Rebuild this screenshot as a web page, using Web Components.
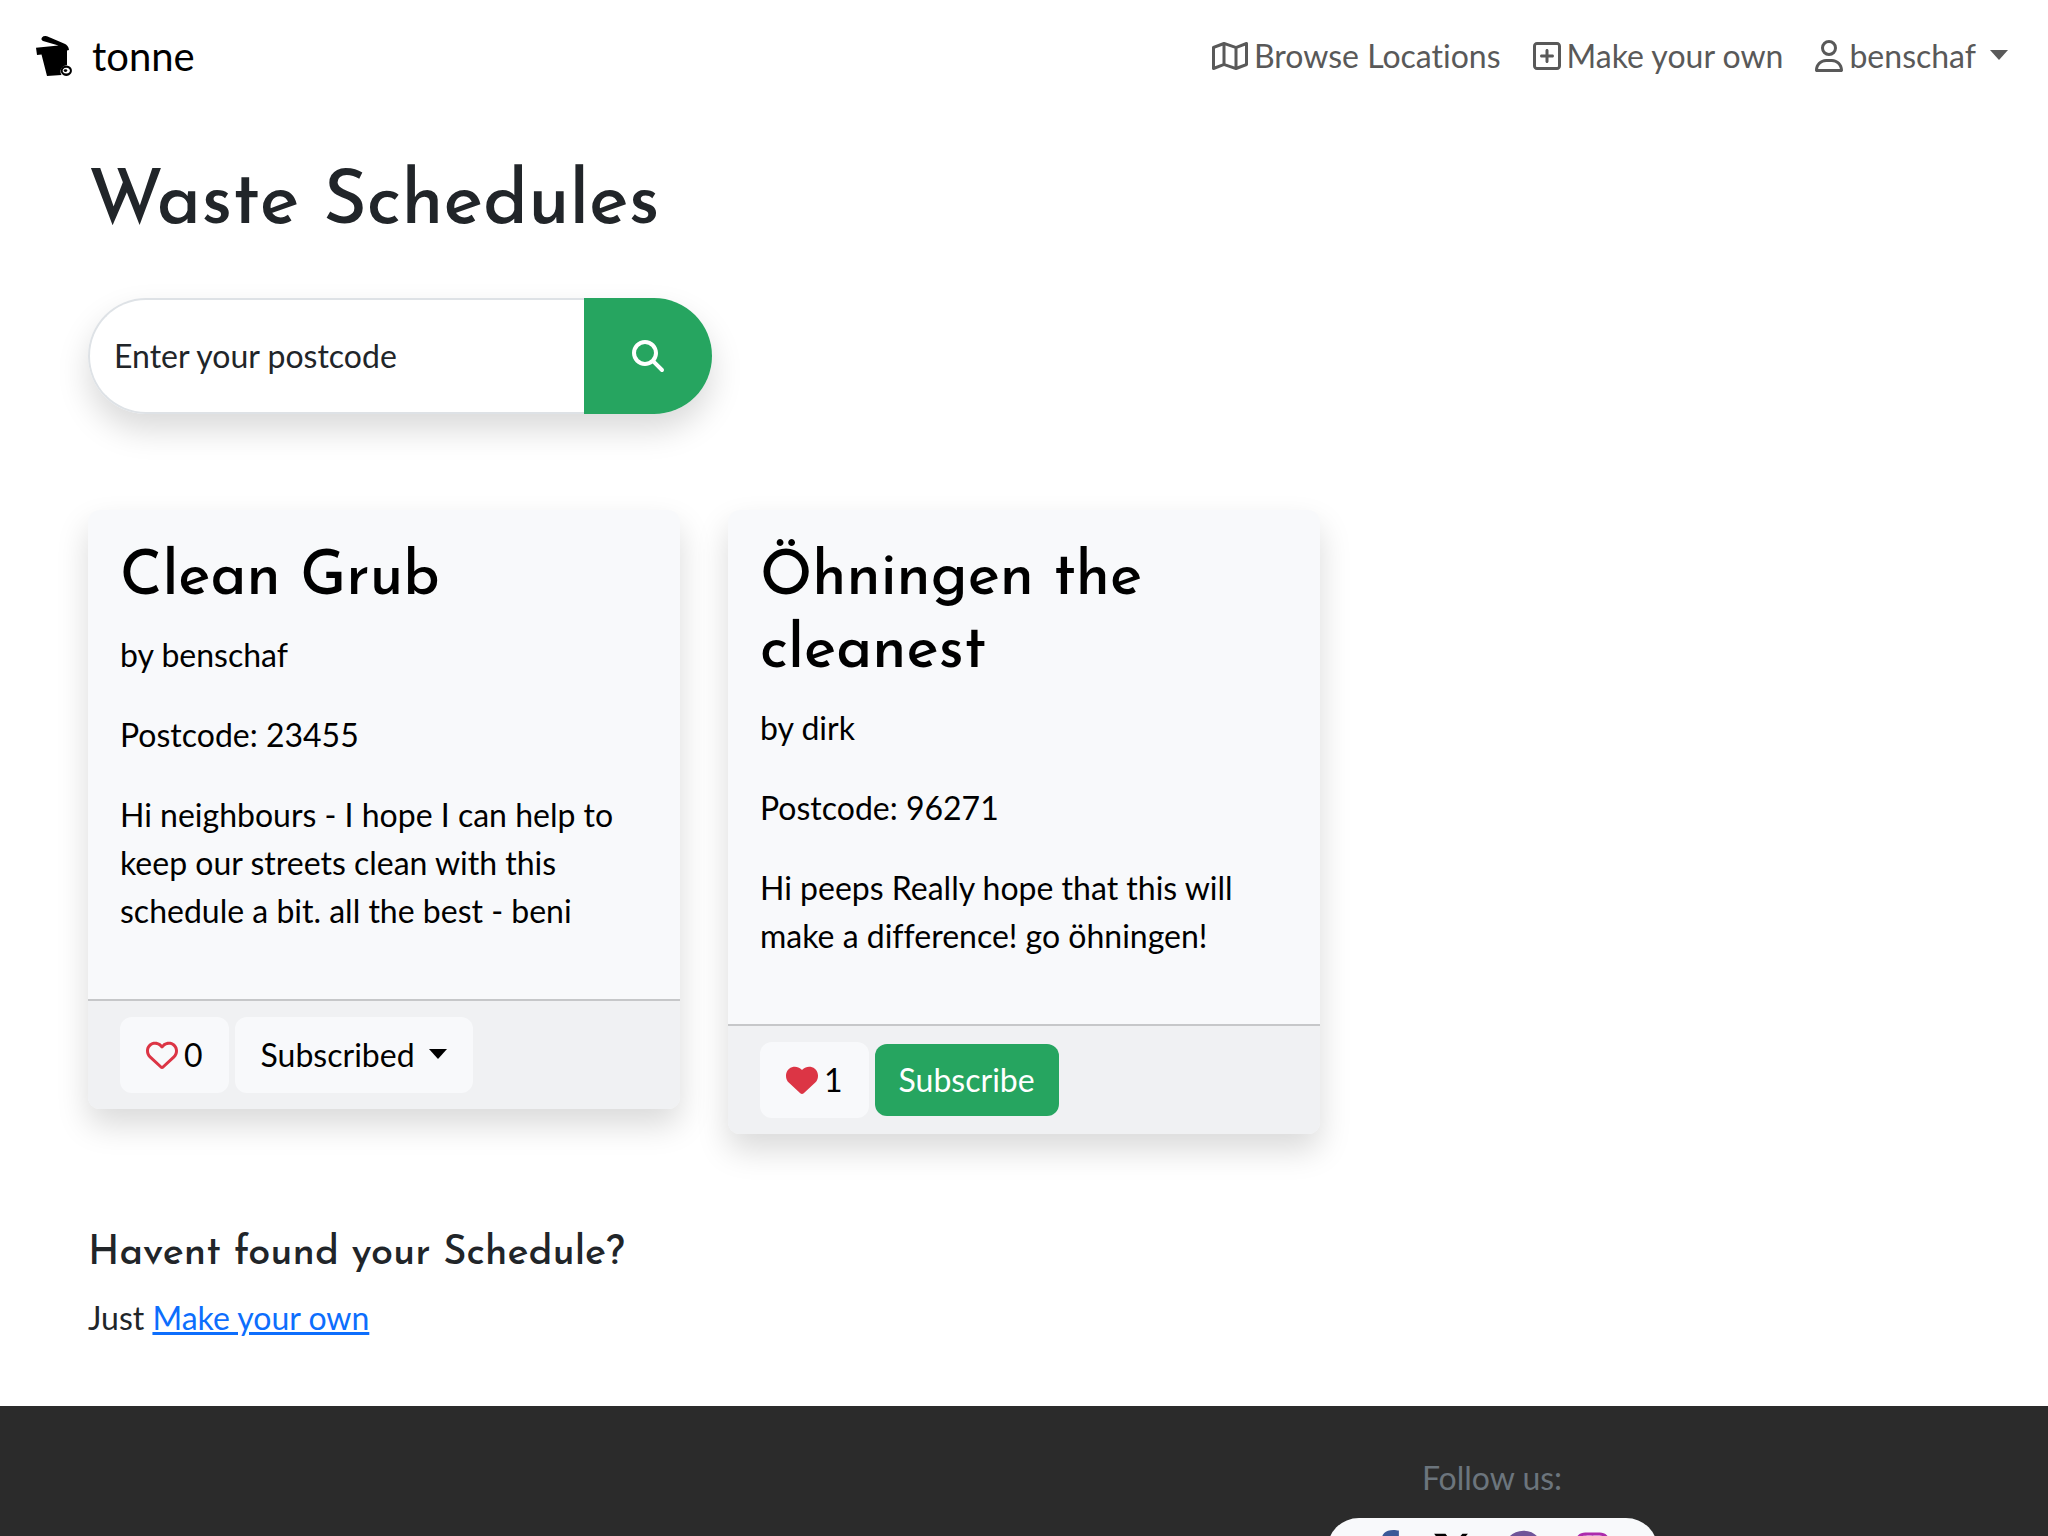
<!DOCTYPE html>
<html lang="en">
<head>
<meta charset="utf-8">
<title>tonne</title>
<style>
body { margin: 0; background: #fff; color: #212529; font: 400 32px/48px Lato, "Liberation Sans", sans-serif; text-rendering: optimizeLegibility; font-variant-ligatures: none; --heading: "Josefin Sans", Lato, sans-serif; --green: #26a560; }
</style>
</head>
<body>
<tonne-app></tonne-app>
<script>
const define = (name, html, init) => {
  const template = document.createElement('template');
  template.innerHTML = '<style>*{box-sizing:border-box}:host{display:block}svg{display:block;fill:currentColor}p{margin:0}button{font:inherit;color:inherit;border:0;cursor:pointer;text-rendering:inherit}</style>' + html;
  customElements.define(name, class extends HTMLElement {
    constructor() {
      super();
      this.attachShadow({ mode: 'open' }).append(template.content.cloneNode(true));
    }
    connectedCallback() { if (init) init(this, this.shadowRoot); }
  });
};

const icons = {
  map: [576, 'M565.6 36.2C572.1 40.7 576 48.1 576 56V392c0 10-6.2 18.9-15.5 22.4l-168 64c-5.2 2-10.9 2.1-16.1 .3L192.5 417.5l-160 61c-7.4 2.8-15.7 1.8-22.2-2.7S0 463.9 0 456V120c0-10 6.1-18.9 15.5-22.4l168-64c5.2-2 10.9-2.1 16.1-.3L383.5 94.5l160-61c7.4-2.8 15.7-1.8 22.2 2.7zM48 136.5V421.2l120-45.7V90.8L48 136.5zM360 422.7V137.3l-144-48V374.7l144 48zm48-1.5l120-45.7V90.8L408 136.5V421.2z'],
  plus: [448, 'M64 80c-8.8 0-16 7.2-16 16V416c0 8.8 7.2 16 16 16H384c8.8 0 16-7.2 16-16V96c0-8.8-7.2-16-16-16H64zM0 96C0 60.7 28.7 32 64 32H384c35.3 0 64 28.7 64 64V416c0 35.3-28.7 64-64 64H64c-35.3 0-64-28.7-64-64V96zM200 344V280H136c-13.3 0-24-10.7-24-24s10.7-24 24-24h64V168c0-13.3 10.7-24 24-24s24 10.7 24 24v64h64c13.3 0 24 10.7 24 24s-10.7 24-24 24H248v64c0 13.3-10.7 24-24 24s-24-10.7-24-24z'],
  user: [448, 'M304 128a80 80 0 1 0 -160 0 80 80 0 1 0 160 0zM96 128a128 128 0 1 1 256 0A128 128 0 1 1 96 128zM49.3 464H398.7c-8.9-63.3-63.3-112-129-112H178.3c-65.7 0-120.1 48.7-129 112zM0 482.3C0 383.8 79.8 304 178.3 304h91.4C368.2 304 448 383.8 448 482.3c0 16.4-13.3 29.7-29.7 29.7H29.7C13.3 512 0 498.7 0 482.3z'],
  search: [512, 'M416 208c0 45.9-14.9 88.3-40 122.7L502.6 457.4c12.5 12.5 12.5 32.8 0 45.3s-32.8 12.5-45.3 0L330.7 376c-34.4 25.2-76.8 40-122.7 40C93.1 416 0 322.9 0 208S93.1 0 208 0S416 93.1 416 208zM208 352a144 144 0 1 0 0-288 144 144 0 1 0 0 288z'],
  heart: [512, 'M225.8 468.2l-2.5-2.3L48.1 303.2C17.4 274.7 0 234.7 0 192.8v-3.3c0-70.4 50-130.8 119.2-144C158.6 37.9 198.9 47 231 69.6c9 6.4 17.4 13.8 25 22.3c4.2-4.8 8.7-9.2 13.5-13.3c3.7-3.2 7.5-6.2 11.5-9c0 0 0 0 0 0C313.1 47 353.4 37.9 392.8 45.4C462 58.6 512 119.1 512 189.5v3.3c0 41.9-17.4 81.9-48.1 110.4L288.7 465.9l-2.5 2.3c-8.2 7.6-19 11.9-30.2 11.9s-22-4.2-30.2-11.9zM239.1 145c-.4-.3-.7-.7-1-1.1l-17.8-20c0 0-.1-.1-.1-.1c0 0 0 0 0 0c-23.1-25.9-58-37.7-92-31.2C81.6 101.5 48 142.1 48 189.5v3.3c0 28.5 11.9 55.8 32.8 75.2L256 430.7 431.2 268c20.9-19.4 32.8-46.7 32.8-75.2v-3.3c0-47.3-33.6-88-80.1-96.9c-34-6.5-69 5.4-92 31.2c0 0 0 0-.1 .1s0 0-.1 .1l-17.8 20c-.3 .4-.7 .7-1 1.1c-4.5 4.5-10.6 7-16.9 7s-12.4-2.5-16.9-7z'],
  'heart-full': [512, 'M47.6 300.4L228.3 469.1c7.5 7 17.4 10.9 27.7 10.9s20.2-3.9 27.7-10.9L464.4 300.4c30.4-28.3 47.6-68 47.6-109.5v-5.8c0-69.9-50.5-129.5-119.4-141C347 36.5 300.6 51.4 268 84L256 96 244 84c-32.6-32.6-79-47.5-124.6-39.9C50.5 55.6 0 115.2 0 185.1v5.8c0 41.5 17.2 81.2 47.6 109.5z'],
  facebook: [320, 'M80 299.3V512H196V299.3h86.5l18-97.8H196V166.900c0-51.700 20.300-71.500 72.700-71.500c16.300 0 29.400 .4 37 1.200V7.900C291.400 4 256.400 0 236.200 0C129.300 0 80 50.500 80 159.400v42.100H14v97.800H80z'],
  x: [512, 'M389.2 48h70.6L305.6 224.2 487 464H345L233.7 318.6 106.5 464H35.8L200.700 275.500 26.800 48H172.400L272.900 180.900 389.200 48zM364.400 421.800h39.100L151.100 88h-42L364.400 421.800z'],
  github: [496, 'M248 8C105.600 8 0 116 0 256c0 110.900 69.800 205.800 169.500 239.200 12.800 2.300 17.300-5.600 17.300-12.100 0-6.200-.3-40.400-.3-61.400 0 0-70 15-84.700-29.800 0 0-11.400-29.100-27.800-36.600 0 0-22.900-15.700 1.600-15.400 0 0 24.900 2 38.600 25.800 21.900 38.600 58.600 27.500 72.900 20.900 2.300-16 8.800-27.100 16-33.700-55.900-6.200-112.300-14.300-112.300-110.500 0-27.500 7.600-41.300 23.600-58.900-2.600-6.500-11.100-33.300 2.600-67.900 20.900-6.500 69 27 69 27 20-5.600 41.500-8.500 62.800-8.500s42.800 2.900 62.800 8.500c0 0 48.100-33.600 69-27 13.700 34.700 5.200 61.400 2.600 67.900 16 17.700 25.800 31.500 25.800 58.900 0 96.500-58.900 104.200-114.800 110.500 9.200 7.900 17 22.900 17 46.400 0 33.700-.3 75.400-.3 83.600 0 6.500 4.600 14.400 17.300 12.100C428.200 461.800 496 366.900 496 256 496 116 390.400 8 248 8z'],
  instagram: [448, 'M224.1 141c-63.6 0-114.9 51.3-114.9 114.9s51.3 114.9 114.9 114.9S339 319.5 339 255.9 287.7 141 224.1 141zm0 189.6c-41.1 0-74.7-33.5-74.7-74.7s33.5-74.7 74.7-74.7 74.7 33.5 74.7 74.7-33.6 74.7-74.7 74.7zm146.4-194.3c0 14.9-12 26.8-26.8 26.8-14.9 0-26.8-12-26.8-26.8s12-26.8 26.8-26.8 26.8 12 26.8 26.8zm76.1 27.2c-1.7-35.9-9.9-67.7-36.2-93.9-26.2-26.2-58-34.4-93.9-36.2-37-2.1-147.9-2.1-184.9 0-35.8 1.7-67.6 9.9-93.9 36.1s-34.4 58-36.2 93.9c-2.1 37-2.1 147.9 0 184.9 1.7 35.9 9.9 67.7 36.2 93.9s58 34.4 93.9 36.2c37 2.1 147.9 2.1 184.9 0 35.9-1.7 67.7-9.9 93.9-36.2 26.2-26.2 34.4-58 36.2-93.9 2.1-37 2.1-147.8 0-184.8zM398.8 388c-7.8 19.6-22.9 34.7-42.6 42.6-29.5 11.7-99.5 9-132.1 9s-102.7 2.6-132.1-9c-19.6-7.8-34.7-22.9-42.6-42.6-11.7-29.5-9-99.5-9-132.1s-2.6-102.7 9-132.1c7.8-19.6 22.9-34.7 42.6-42.6 29.5-11.7 99.5-9 132.1-9s102.7-2.6 132.1 9c19.6 7.8 34.7 22.9 42.6 42.6 11.7 29.5 9 99.5 9 132.1s2.7 102.7-9 132.1z']
};
define('tonne-icon', '<svg aria-hidden="true"><path/></svg>', (el, root) => {
  const [width, d] = icons[el.getAttribute('name')];
  const size = Number(el.getAttribute('size') || 32);
  const svg = root.querySelector('svg');
  svg.setAttribute('viewBox', `0 0 ${width} 512`);
  svg.setAttribute('height', size);
  svg.setAttribute('width', Math.round(width * size / 512));
  root.querySelector('path').setAttribute('d', d);
});

const prependIcon = (target, name) => {
  const icon = document.createElement('tonne-icon');
  icon.setAttribute('name', name);
  target.prepend(icon);
};

define('tonne-caret', '<style>:host{margin:0 0 2px 14px;border:solid transparent;border-width:10px 9px 0;border-top-color:currentColor}</style>');

define('nav-link', `<style>
a{display:flex;align-items:center;gap:6px;padding:0 16px;color:#595959;text-decoration:none}
tonne-caret{display:none}
:host([menu]) tonne-caret{display:block;margin-left:8px}
</style><a href="#"><span><slot></slot></span><tonne-caret></tonne-caret></a>`, (el, root) => prependIcon(root.querySelector('a'), el.getAttribute('icon')));

define('tonne-navbar', `<style>
nav{display:flex;align-items:center;justify-content:space-between;padding:26px 24px 26px 32px}
.brand{display:flex;align-items:center;gap:16px;color:#000;text-decoration:none;font-size:40px;line-height:60px}
.links{display:flex}
</style>
<nav>
<a class="brand" href="#">
<svg width="44" height="48" viewBox="0 0 44 48" aria-hidden="true">
<path d="M4 15.700L26.500 13.500 11 9Q8.500 7.500 10 5.500Q11.500 3.500 15 4.200L32 11.500Q36.500 13 37 18L35 18.500V33Q29.500 34 28.500 38.500Q28.300 41 29.500 43L15 44 9.500 22.500 5 23Z"/>
<path fill-rule="evenodd" d="M34.300 33.500a5.600 5.200 0 1 0 .01 0ZM34.300 35.800a3.600 2.900 0 1 1-.01 0Z"/><ellipse cx="33.500" cy="38.600" rx="1.800" ry="1.300"/>
</svg><span>tonne</span></a>
<div class="links"><nav-link icon="map">Browse Locations</nav-link><nav-link icon="plus">Make your own</nav-link><nav-link icon="user" menu>benschaf</nav-link></div>
</nav>`);

define('postcode-search', `<style>
form{display:flex;width:624px;max-width:100%;height:116px;border-radius:58px;box-shadow:0 16px 32px rgba(0,0,0,.15)}
input{flex:1;min-width:0;font:inherit;text-rendering:inherit;color:#212529;background:#fff;border:2px solid #dee2e6;border-right:0;border-radius:58px 0 0 58px;padding:0 24px;outline:0}
input::placeholder{color:#212529;opacity:1}
button{background:var(--green);color:#fff;padding:0 48px;border-radius:0 58px 58px 0}
</style>
<form><input type="text" aria-label="Enter your postcode" placeholder="Enter your postcode"><button type="button" aria-label="Search"><tonne-icon name="search"></tonne-icon></button></form>`);

define('like-button', `<style>
button{display:flex;align-items:center;gap:6px;height:76px;padding:0 26px;border-radius:12px;background:#f8f9fb;color:#000}
tonne-icon{color:#dc3545}
</style><button type="button"><span><slot></slot></span></button>`, (el, root) => prependIcon(root.querySelector('button'), el.hasAttribute('liked') ? 'heart-full' : 'heart'));

define('subscribe-button', `<style>
button{display:flex;align-items:center;height:72px;padding:0 24px;border-radius:12px;background:var(--green);color:#fff}
:host([subscribed]) button{height:76px;padding:0 26px;background:#f8f9fb;color:#000}
:host(:not([subscribed])) tonne-caret{display:none}
</style><button type="button"><slot></slot><tonne-caret></tonne-caret></button>`);

define('schedule-card', `<style>
:host{border-radius:12px;background:#f8f9fb;color:#000;box-shadow:0 16px 32px rgba(0,0,0,.15);overflow:hidden}
.body{display:flex;flex-direction:column;gap:32px;padding:32px 32px 64px}
h2{margin:0 0 -16px;font:500 61px/73px var(--heading)}
footer{display:flex;align-items:center;gap:6px;padding:16px 32px;background:#f0f1f3;border-top:2px solid #c6c7c9}
</style>
<div class="body"><h2><slot name="title"></slot></h2><p>by <slot name="author"></slot></p><p>Postcode: <slot name="postcode"></slot></p><p><slot></slot></p></div>
<footer><slot name="actions"></slot></footer>`);

define('tonne-footer', `<style>
footer{display:grid;grid-template-columns:1fr 1fr;padding:48px 88px;background:#2b2b2b;color:#6c757d}
.follow{grid-column:2;display:flex;flex-direction:column;align-items:center;gap:16px}
.social{display:flex;gap:32px;padding:12px 48px;border-radius:32px;background:#f8f9fb}
</style>
<footer><div class="follow"><p>Follow us:</p>
<div class="social">
<a href="#" aria-label="Facebook" style="color:#3b5998"><tonne-icon name="facebook" size="40"></tonne-icon></a>
<a href="#" aria-label="X" style="color:#000"><tonne-icon name="x" size="40"></tonne-icon></a>
<a href="#" aria-label="GitHub" style="color:#6f5499"><tonne-icon name="github" size="40"></tonne-icon></a>
<a href="#" aria-label="Instagram" style="color:#ac2bac"><tonne-icon name="instagram" size="40"></tonne-icon></a>
</div></div></footer>`);

define('tonne-app', `<style>
main{padding:48px 88px 64px}
h1{margin:0 0 48px;font:500 75px/90px var(--heading)}
.cards{display:grid;grid-template-columns:repeat(3,minmax(0,1fr));column-gap:48px;align-items:start;margin:96px 0}
h5{margin:0 0 16px;font:500 40px/48px var(--heading)}
main a{color:#0d6efd}
</style>
<tonne-navbar></tonne-navbar>
<main>
<h1>Waste Schedules</h1>
<postcode-search></postcode-search>
<div class="cards">
<schedule-card><span slot="title">Clean Grub</span><span slot="author">benschaf</span><span slot="postcode">23455</span>Hi neighbours - I hope I can help to keep our streets clean with this schedule a bit. all the best - beni<like-button slot="actions">0</like-button><subscribe-button slot="actions" subscribed>Subscribed</subscribe-button></schedule-card>
<schedule-card><span slot="title">Öhningen the cleanest</span><span slot="author">dirk</span><span slot="postcode">96271</span>Hi peeps Really hope that this will make a difference! go öhningen!<like-button slot="actions" liked>1</like-button><subscribe-button slot="actions">Subscribe</subscribe-button></schedule-card>
</div>
<h5>Havent found your Schedule?</h5>
<p>Just <a href="#">Make your own</a></p>
</main>
<tonne-footer></tonne-footer>`);
</script>
</body>
</html>
